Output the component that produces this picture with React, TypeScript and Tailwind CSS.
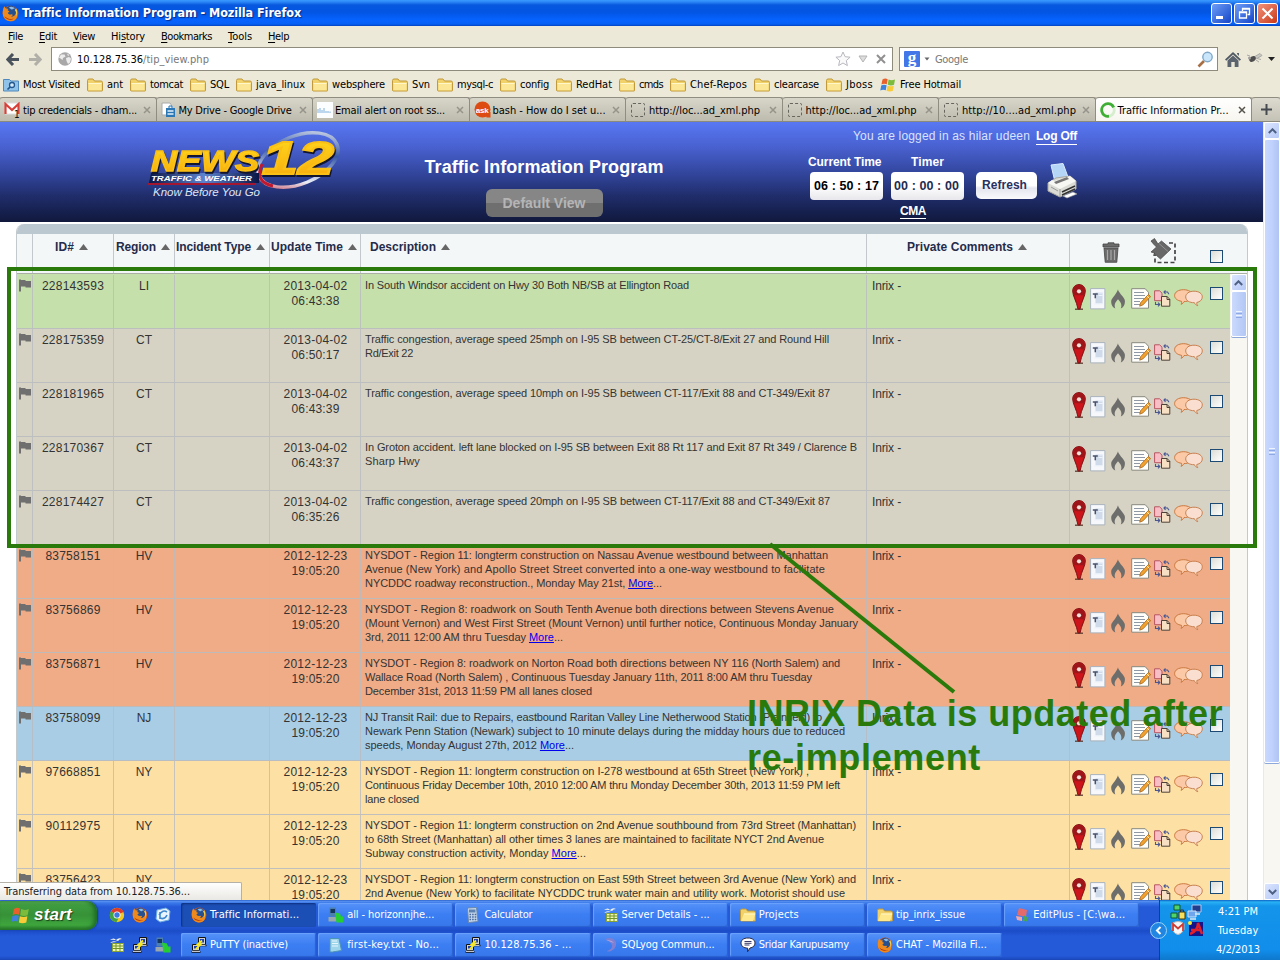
import React, { useLayoutEffect, useRef, useState } from "react";

/* Text set to a known advance width by spreading the difference over its letters. */
function Fit({ w, className = "", children }: { w: number; className?: string; children: React.ReactNode }) {
  const ref = useRef<HTMLSpanElement>(null);
  const [spacing, setSpacing] = useState(0);
  useLayoutEffect(() => {
    const el = ref.current;
    if (!el) return;
    const count = (el.textContent || "").length;
    const natural = el.getBoundingClientRect().width - spacing * count;
    if (count > 0) setSpacing((w - natural) / count);
  }, [w]);
  return (
    <span ref={ref} className={`inline-block whitespace-pre ${className}`} style={{ letterSpacing: `${spacing}px` }}>
      {children}
    </span>
  );
}

const TAHOMA = "font-['DejaVu_Sans_Condensed','DejaVu_Sans',sans-serif] [font-stretch:condensed]";
const ARIAL = "font-['Liberation_Sans',sans-serif]";

/* ---------- icons ---------- */

function Firefox({ s = 16 }: { s?: number }) {
  return (
    <svg width={s} height={s} viewBox="0 0 16 16" className="shrink-0">
      <circle cx="8" cy="8" r="7.4" fill="#d9560f" />
      <circle cx="8.200" cy="6.200" r="5.400" fill="#27508f" />
      <path d="M6.500 2.500c1.600-1.400 4.500-.8 5.500 1-1.400-.2-1.800.6-3 .8z" fill="#8dbde6" />
      <path d="M1 4.500C1.200 3 2 1.600 2.600 1.200c0 1 .3 1.500 1 2.100 1-.2 1.800 0 2.500.4C5 4.400 5 5 6.400 5.600c.9.3.6 1.100-.7 1.500-.7 1.200 1.500 2.500 3.400 1.600 1.500.2.9 1.700-.7 2.200 3 .6 5.400-2 4.700-5.400C15.400 8.500 14.800 15.300 8 15.400 2.500 15.300-.3 10 1 4.500z" fill="#ee8a1d" />
      <path d="M13.300 3.300c1.500 2.600 1.300 5.500.2 7.300.2-2-.2-4.500-1.500-6z" fill="#f8cf45" />
      <path d="M2.300 10.500c1.500 3 5.500 4.300 8.800 2.500-3 .5-6.300-.2-8.800-2.500z" fill="#a92d0c" />
    </svg>
  );
}

function Folder({ open = false }: { open?: boolean }) {
  return (
    <svg width="16" height="16" viewBox="0 0 16 16" className="shrink-0">
      <path d="M.5 13.500V3.500q0-1.500 1.500-1.500h4l1.500 2h6.500q1.500 0 1.500 1.500v8q0 .5-.5.5H1z" fill="#f1d169" stroke="#c19a3b" />
      <path d={open ? "M1 14l3-7.500h11.500l-2.500 7.500z" : "M1.500 13.300V6h13v7.300z"} fill={open ? "#ffe98c" : "#fbe795"} />
      <path d={open ? "M4 7h11" : "M1.500 6.500h13"} stroke="#fff7c9" />
    </svg>
  );
}

function MostVisited() {
  return (
    <svg width="16" height="16" viewBox="0 0 16 16" className="shrink-0">
      <path d="M.5 14V2.500h6l1.500 1.500h7.500v10z" fill="#8fc3ea" stroke="#4f88bd" />
      <circle cx="9" cy="8" r="2.500" fill="#d5ecfb" stroke="#24578c" strokeWidth="1.300" />
      <path d="M7.200 9.800L4.500 12.500" stroke="#24578c" strokeWidth="1.700" />
    </svg>
  );
}

function WinFlag({ s = 16 }: { s?: number }) {
  return (
    <svg width={s} height={s} viewBox="0 0 16 16" className="shrink-0">
      <path d="M2.500 2.500Q5 .8 7.700 2.200L6.800 7.300Q4 6 1.400 7.500z" fill="#e8612c" />
      <path d="M8.600 2.600Q11.500 4 15 2.500L14 7.700Q11 9.100 7.700 7.700z" fill="#7dbb3c" />
      <path d="M1.200 8.500Q4 7 6.600 8.300L5.800 13.300Q3 12 .3 13.500z" fill="#3f82dd" />
      <path d="M7.500 8.700Q10.600 10 13.800 8.700L12.900 13.800Q9.700 15.200 6.600 13.800z" fill="#f8cb38" />
    </svg>
  );
}

function Putty() {
  return (
    <svg width="16" height="16" viewBox="0 0 16 16" className="shrink-0">
      <path d="M7.500.5h7v7h-7zM1.500 7.500h7v6h-7z" fill="#d4d4cf" stroke="#111" />
      <path d="M9 2h4v3.500H9zM3 9h4v2.500H3z" fill="#1b3fb0" />
      <path d="M8 8.500h7.500M.5 15h9" stroke="#111" strokeWidth="1.500" />
      <path d="M8.500 8.300h6M1 14.300h8" stroke="#eee" />
      <path d="M11 3.500L6.500 7.500h3L5 12" fill="none" stroke="#f7e822" strokeWidth="1.800" />
    </svg>
  );
}

function HostsIcon() {
  return (
    <svg width="16" height="16" viewBox="0 0 16 16" className="shrink-0">
      <path d="M1.500.500h6.500v9H1.500z" fill="#4b7fae" />
      <path d="M2.500 2h4.500v4H2.500z" fill="#14365e" />
      <path d="M.5 10h8v4.500h-8z" fill="#97a7ad" />
      <path d="M7 5.500l5 1 1 3h2.500V15.500H8.500z" fill="#25cf33" />
    </svg>
  );
}

function SheetIcon() {
  return (
    <svg width="16" height="16" viewBox="0 0 16 16" className="shrink-0">
      <path d="M1 3Q5 0 7 3q3-3 6-1-3 0-4 2-4-2-8-1zM1 6q3-3 7-1-4 0-7 1z" fill="#f4f6ea" />
      <path d="M3.500 6.500h11v8h-11z" fill="#f1f6b4" stroke="#8aa434" />
      <path d="M3.500 9h11M3.500 11.500h11M7 6.500v8M11 6.500v8" stroke="#71952b" />
    </svg>
  );
}

function TaskGlyph({ kind }: { kind: string }) {
  switch (kind) {
    case "firefox":
      return <Firefox />;
    case "putty":
      return <Putty />;
    case "hosts":
      return <HostsIcon />;
    case "sheet":
      return <SheetIcon />;
    case "folder":
      return <Folder open />;
    case "calc":
      return (
        <svg width="16" height="16" viewBox="0 0 16 16" className="shrink-0">
          <path d="M2.500 1l9-.5 1.500 14-9.500 1z" fill="#c7d9ec" stroke="#6c88ac" />
          <path d="M4 2.500h6.500v3H4z" fill="#5d82b2" />
          <path d="M4.500 7.500h7M4.500 10h7M4.500 12.500h7" stroke="#49699a" strokeDasharray="1.600 1" strokeWidth="1.500" />
        </svg>
      );
    case "note":
      return (
        <svg width="16" height="16" viewBox="0 0 16 16" className="shrink-0">
          <path d="M2 1.500h9l2.500 12-9 1.500H2z" fill="#9fd5ea" stroke="#4c94b8" />
          <path d="M4 4h5M4 6.500h6M4 9h6" stroke="#e6f8ff" />
        </svg>
      );
    case "sql":
      return (
        <svg width="16" height="16" viewBox="0 0 16 16" className="shrink-0">
          <path d="M2 2q8-3 11 3 1 6-5 9-3 1-4 0 6-2 5-6-2-4-7-6z" fill="#7f7fd4" />
          <path d="M3 3q6 0 8 3-3-1-8-3z" fill="#b9a5d8" />
        </svg>
      );
    case "chat":
      return (
        <svg width="16" height="16" viewBox="0 0 16 16" className="shrink-0">
          <path d="M8 1c4.500 0 7 2.200 7 5s-2 4.500-5 5l-2.500 3.800.2-3.700C3.500 11 1 9 1 6s2.500-5 7-5z" fill="#fff" stroke="#2a2a44" />
          <path d="M4.500 4.500h7M4.500 6.300h7M4.500 8h5" stroke="#3a3a68" />
        </svg>
      );
    default:
      return (
        <svg width="16" height="16" viewBox="0 0 16 16" className="shrink-0">
          <path d="M5 1l8 2-1 7-9-2z" fill="#e66a6a" />
          <path d="M2 9l6 1v4l-5-1z" fill="#f4a7a7" />
          <path d="M10 9l3 5M9 14l5-4" stroke="#4ba84c" strokeWidth="2" />
        </svg>
      );
  }
}

function Logo() {
  return (
    <svg width="196" height="72" viewBox="0 0 196 72" className="shrink-0">
      <defs>
        <linearGradient id="ring" x1="0" y1="1" x2="1" y2="0">
          <stop offset="0" stopColor="#b9152c" />
          <stop offset=".25" stopColor="#e9edf6" />
          <stop offset=".6" stopColor="#3658a4" />
          <stop offset="1" stopColor="#ffffff" />
        </linearGradient>
        <linearGradient id="gold" x1="0" y1="0" x2="0" y2="1">
          <stop offset="0" stopColor="#ffdc1e" />
          <stop offset="1" stopColor="#f7a80c" />
        </linearGradient>
        <linearGradient id="strip" x1="0" y1="0" x2="1" y2="0">
          <stop offset="0" stopColor="#0a1646" />
          <stop offset=".5" stopColor="#5d83cf" />
          <stop offset="1" stopColor="#0a1646" />
        </linearGradient>
      </defs>
      <ellipse cx="151" cy="30" rx="42" ry="24" transform="rotate(-22 151 30)" fill="none" stroke="url(#ring)" strokeWidth="3.500" />
      <path d="M115 34Q107 52 126 56" fill="none" stroke="#c11930" strokeWidth="3" />
      <path d="M4 43h108v10H2z" fill="url(#strip)" />
      <path d="M1 54h108" stroke="#a4162f" strokeWidth="2" />
      <g fontFamily="Liberation Sans, sans-serif" fontWeight="bold" fontStyle="italic">
        <text x="4" y="40.500" fontSize="29" textLength="108" lengthAdjust="spacingAndGlyphs" fill="url(#gold)" stroke="#fbc015" strokeWidth="1.400" className="[filter:drop-shadow(1px_2px_0_#12162e)]">NEWS</text>
        <text x="115" y="43.500" fontSize="46" textLength="72" lengthAdjust="spacingAndGlyphs" fill="url(#gold)" stroke="#fbc015" strokeWidth="2" className="[filter:drop-shadow(1px_2px_0_#12162e)]">12</text>
        <text x="4" y="50.500" fontSize="8" textLength="101" lengthAdjust="spacingAndGlyphs" fill="#fff">TRAFFIC &amp; WEATHER</text>
      </g>
      <text x="6" y="66" fontSize="11.500" fontFamily="Liberation Sans, sans-serif" fontStyle="italic" textLength="107" fill="#dfe4f5">Know Before You Go</text>
    </svg>
  );
}

function Printer() {
  return (
    <svg width="31" height="37" viewBox="0 0 31 37" className="shrink-0">
      <path d="M4 2l12-1.500L21 14 8 19z" fill="#b5d5f7" stroke="#d9ebff" />
      <path d="M1 20l8-5 14-2 6 5v8L13 34 1 28z" fill="#dcdcd6" stroke="#a9a9a3" />
      <path d="M1 20l12 6 16-8-6-5-3 1-12 4-3-1z" fill="#f7f7f3" />
      <path d="M7 19l13-5 2 2-13 5z" fill="#777" />
      <path d="M13 26v8M4 24l7 4" stroke="#999" />
      <path d="M15 29l13-6M15 32l13-6" stroke="#333" strokeWidth="1.500" />
      <path d="M16 33l10-4 4 2-10 4z" fill="#fff" stroke="#999" strokeWidth=".6" />
    </svg>
  );
}

function RowIcons() {
  return (
    <div className="flex items-start pl-[2px] pt-[9px]">
      <svg width="14" height="26" viewBox="0 0 14 26" className="shrink-0">
        <path d="M3 25.200h8" stroke="#5c3b30" strokeWidth="1.300" />
        <path d="M7 .6c3.800 0 6.300 2.800 6.300 6.300C13.300 12 9.500 17 8 25h-2C4.500 17 .7 12 .7 6.900.7 3.400 3.200.6 7 .6z" fill="#cc141a" stroke="#7d1214" />
        <path d="M7 1.200c3.500 0 5.700 2.500 5.700 5.700 0 1.600-.5 3-1.200 4.300H2.500C1.800 9.900 1.300 8.500 1.300 6.900c0-3.200 2.200-5.700 5.700-5.700z" fill="#9c1519" />
        <circle cx="7" cy="7.300" r="2.100" fill="#f1e2da" />
      </svg>
      <svg width="16" height="22" viewBox="0 0 16 22" className="ml-[4px] mt-[4px] shrink-0">
        <path d="M.6.600h14.300v20.300H.6z" fill="#f6f8fb" stroke="#a9b3be" />
        <path d="M5.500 4.500h7v11h-7z" fill="#cfdaea" />
        <path d="M8.500 5h4M8.500 7.500h4M4 16h8" stroke="#eef4fc" />
        <path d="M2.800 6h5M5.300 6v4.300" stroke="#48536b" strokeWidth="1.500" />
      </svg>
      <svg width="14" height="20" viewBox="0 0 14 20" className="ml-[5px] mt-[5px] shrink-0">
        <path d="M7 .3c.2 3 5 6.500 6.700 10.500.9 4-1 7.500-3.900 8.600 1.300-3 .4-6-2.800-9.100-3 3.100-4.200 6-2.700 9.100C1.200 18.200-.4 14.700.4 11 1.800 8.500 5.800 4.500 7 .3z" fill="#6d6d6b" />
      </svg>
      <svg width="20" height="21" viewBox="0 0 20 21" className="ml-[6px] mt-[4px] shrink-0">
        <path d="M.7.700h13.500l3.300 3.600v15.900H.7z" fill="#fffefb" stroke="#87887f" />
        <path d="M3 4.500h10M3 7.500h11M3 10.500h10M3 13.500h6M3 16.500h6" stroke="#8f98a5" />
        <path d="M17.300 6.600l2.300 2-7.500 8.200-3.400 1.400 1-3.600z" fill="#f2a12c" stroke="#a8641a" strokeWidth=".8" />
        <path d="M16 8l2.300 2.200" stroke="#fff0bd" />
      </svg>
      <svg width="17" height="17" viewBox="0 0 17 17" className="ml-[3px] mt-[6px] shrink-0">
        <path d="M.6.800h5l2.400 2.400v7.500H.6z" fill="#f7bfc5" stroke="#b75561" />
        <path d="M7.500 6.500h5.600l2.700 2.800v6.900H7.500z" fill="#f7dfc4" stroke="#4e4238" />
        <path d="M13 6.500v3h3" fill="none" stroke="#4e4238" />
        <path d="M10 2h3.500l1.500 2.200M11.500.5L10 2l1.500 1.800M1.500 12v2.500h4M4 12.700l1.800 1.800L4 16.300" fill="none" stroke="#4a5792" strokeWidth="1.100" />
      </svg>
      <svg width="29" height="18" viewBox="0 0 29 18" className="ml-[3px] mt-[5px] shrink-0">
        <path d="M9.500.7c5 0 9 2.300 9 5.900s-4 6-8.500 6c-.5 1.200-1.500 2.200-3 2.700.7-1 .8-2 .5-3C3.500 11.700.6 9.500.6 6.600.6 3 4.500.7 9.500.7z" fill="#fcc9a6" stroke="#c9783f" />
        <path d="M20 2.200c4.800 0 8.300 2.300 8.300 5.700 0 2.800-2.300 5-5.500 5.600-.2 1.200.2 2.300 1 3.200-1.700-.5-2.900-1.500-3.400-3-5 .1-8.700-2.200-8.700-5.800 0-3.300 3.300-5.700 8.300-5.700z" fill="#fadfd0" stroke="#c9804f" />
      </svg>
      <Checkbox className="ml-[7px] mt-[3px]" />
    </div>
  );
}

function Checkbox({ className = "" }: { className?: string }) {
  return <div className={`h-[13px] w-[13px] shrink-0 border border-[#1c4a73] bg-linear-to-br from-[#dcdcd6] to-white ${className}`} />;
}

function Chevron({ down = false }: { down?: boolean }) {
  return (
    <svg width="9" height="6" viewBox="0 0 9 6">
      <path d={down ? "M.8 1l3.700 3.700L8.200 1" : "M.8 5l3.700-3.700L8.200 5"} fill="none" stroke="#4d6185" strokeWidth="2" />
    </svg>
  );
}

/* ---------- browser chrome ---------- */

function TitleBar() {
  return (
    <div className="flex h-[26px] items-center bg-[linear-gradient(180deg,#3a9bff_0,#2a86f5_2px,#0758de_5px,#0355e2_12px,#0663ff_20px,#0560f5_24px,#0343c0_26px)] pl-[2px] pr-[2px]">
      <Firefox s={17} />
      <Fit w={278} className={`ml-[3px] pt-px text-[12.500px] font-bold text-white [text-shadow:1px_1px_1px_#0a2a80] ${TAHOMA}`}>
        Traffic Information Program - Mozilla Firefox
      </Fit>
      <div className="ml-auto flex gap-[2px]">
        <div className="flex h-[21px] w-[21px] rounded-[3px] border border-white bg-linear-to-br from-[#6f9df6] to-[#1543c8] pl-[4px] pt-[12px]">
          <div className="h-[3px] w-[7px] bg-white" />
        </div>
        <div className="flex h-[21px] w-[21px] items-center justify-center rounded-[3px] border border-white bg-linear-to-br from-[#6f9df6] to-[#1543c8]">
          <svg width="13" height="13" viewBox="0 0 13 13">
            <path d="M4.500 4V1.500h7v6H9.500M4.500 2h7" fill="none" stroke="#fff" strokeWidth="1.300" />
            <path d="M1.500 5h7v6h-7zM1.500 5.700h7" fill="none" stroke="#fff" strokeWidth="1.300" />
          </svg>
        </div>
        <div className="flex h-[21px] w-[21px] items-center justify-center rounded-[3px] border border-white bg-linear-to-br from-[#f0927a] to-[#c9340d]">
          <svg width="13" height="13" viewBox="0 0 13 13">
            <path d="M1.500 1.500l10 10M11.500 1.500l-10 10" stroke="#fff" strokeWidth="2" />
          </svg>
        </div>
      </div>
    </div>
  );
}

const MENU: [string, string, string, number][] = [
  ["", "F", "ile", 15],
  ["", "E", "dit", 18],
  ["", "V", "iew", 22],
  ["Hi", "s", "tory", 34],
  ["", "B", "ookmarks", 51],
  ["", "T", "ools", 24],
  ["", "H", "elp", 21],
];

function MenuBar() {
  return (
    <div className={`flex h-[20px] gap-[16px] pl-[8px] pt-px text-[11px] leading-[19px] text-black ${TAHOMA}`}>
      {MENU.map(([a, u, b, w]) => (
        <Fit key={u + b} w={w}>
          {a}
          <span className="underline underline-offset-2">{u}</span>
          {b}
        </Fit>
      ))}
    </div>
  );
}

function NavBar() {
  return (
    <div className={`flex h-[26px] items-start pt-px text-[11px] ${TAHOMA}`}>
      <div className="flex h-[24px] w-[51px] items-center gap-[10px] pl-[6px]">
        <svg width="13" height="13" viewBox="0 0 13 13">
          <path d="M7 1L1.800 6.500 7 12M2 6.500h11" fill="none" stroke="#4a525c" strokeWidth="3" />
        </svg>
        <svg width="13" height="13" viewBox="0 0 13 13">
          <path d="M6 1l5.200 5.500L6 12M11 6.500H0" fill="none" stroke="#b0afa8" strokeWidth="3" />
        </svg>
      </div>
      <div className="flex h-[24px] w-[842px] items-center border border-[#8e8b7d] bg-white pl-[6px] pr-[6px]">
        <svg width="14" height="14" viewBox="0 0 14 14">
          <circle cx="7" cy="7" r="6.700" fill="#a8a8a8" />
          <path d="M3 2.500l3.500 0 1 2-2.500 1.500-.5 2-2-1.500-1.500-1zM8 6l3-1 2 1.500-1 4-2 1.500L8.500 9zM9 1.500l2.500 1.500-1.500 1z" fill="#ececec" />
        </svg>
        <Fit w={66} className="ml-[5px] pt-[2px] text-black">10.128.75.36</Fit>
        <Fit w={66} className="pt-[2px] text-[#777]">/tip_view.php</Fit>
        <svg width="16" height="16" viewBox="0 0 16 16" className="ml-auto">
          <path d="M8 1l2.100 4.700 5 .5-3.800 3.400 1.100 5L8 12l-4.400 2.600 1.100-5L.9 6.200l5-.5z" fill="#fafafa" stroke="#b8b8c0" />
        </svg>
        <svg width="10" height="8" viewBox="0 0 10 8" className="ml-[7px]">
          <path d="M1 1h8L5 7z" fill="#ddd" stroke="#b4b4b4" />
        </svg>
        <svg width="10" height="10" viewBox="0 0 10 10" className="ml-[8px]">
          <path d="M1 1l8 8M9 1L1 9" stroke="#909090" strokeWidth="2" />
        </svg>
      </div>
      <div className="ml-[6px] flex h-[24px] w-[319px] items-center border border-[#8e8b7d] bg-white pl-[4px] pr-[3px]">
        <div className="flex h-[16px] w-[16px] items-center justify-center rounded-[1px] bg-[#4377e8] pb-[3px] font-['Liberation_Serif',serif] text-[17px] font-bold leading-none text-white">g</div>
        <svg width="6" height="4" viewBox="0 0 6 4" className="ml-[4px]">
          <path d="M.5.500h5L3 3.500z" fill="#666" />
        </svg>
        <Fit w={33} className="ml-[5px] pt-[2px] text-[#777]">Google</Fit>
        <svg width="17" height="17" viewBox="0 0 17 17" className="ml-auto">
          <path d="M7 10l-5.500 5.500" stroke="#a86f45" strokeWidth="2.600" />
          <circle cx="10.500" cy="6" r="4.700" fill="#c9e6fa" stroke="#81a8c8" strokeWidth="1.400" />
        </svg>
      </div>
      <div className="flex h-[24px] items-center pl-[7px]">
        <svg width="16" height="15" viewBox="0 0 16 15">
          <path d="M8 0l8 7.500-1.300 1.300L8 2.500 1.300 8.800 0 7.500z" fill="#4f5862" />
          <path d="M2.500 8.500L8 3.500l5.500 5V15H9.700v-5H6.300v5H2.500zM12 1h2v3l-2-2z" fill="#5b646e" />
        </svg>
        <svg width="17" height="14" viewBox="0 0 17 14" className="ml-[5px]">
          <path d="M8 5l6-3.500 2 2-5 3z" fill="#c9c8c2" stroke="#aaa9a4" />
          <path d="M11 6.500l4 1M10 8l3 2M4 4L1 3" fill="none" stroke="#aaa9a4" />
          <ellipse cx="6.500" cy="7" rx="3.500" ry="2.500" fill="#4d4d4d" transform="rotate(-30 6.500 7)" />
          <circle cx="3.500" cy="6" r="1.500" fill="#9d9d9d" />
        </svg>
        <svg width="7" height="4" viewBox="0 0 7 4" className="ml-[5px]">
          <path d="M0 0h7L3.500 4z" fill="#222" />
        </svg>
      </div>
    </div>
  );
}

const BOOKMARKS: [string, number][] = [
  ["Most Visited", 57],
  ["ant", 16],
  ["tomcat", 33],
  ["SQL", 19],
  ["java_linux", 49],
  ["websphere", 53],
  ["Svn", 18],
  ["mysql-c", 36],
  ["config", 29],
  ["RedHat", 36],
  ["cmds", 24],
  ["Chef-Repos", 57],
  ["clearcase", 45],
  ["Jboss", 27],
  ["Free Hotmail", 61],
];

function Bookmarks() {
  return (
    <div className={`flex h-[25px] items-center gap-[7px] pl-[3px] text-[11px] text-black ${TAHOMA}`}>
      {BOOKMARKS.map(([name, w], i) => (
        <div key={name} className="flex items-center gap-[4px]">
          {i === 0 ? <MostVisited /> : i === BOOKMARKS.length - 1 ? <WinFlag /> : <Folder />}
          <Fit w={w} className="pt-[2px]">{name}</Fit>
        </div>
      ))}
    </div>
  );
}

const TABS: { icon: string; title: string; w: number }[] = [
  { icon: "gmail", title: "tip credencials - dham...", w: 114 },
  { icon: "drive", title: "My Drive - Google Drive", w: 113 },
  { icon: "mail", title: "Email alert on root ss...", w: 110 },
  { icon: "ask", title: "bash - How do I set u...", w: 113 },
  { icon: "blank", title: "http://loc...ad_xml.php", w: 111 },
  { icon: "blank", title: "http://loc...ad_xml.php", w: 111 },
  { icon: "blank", title: "http://10....ad_xml.php", w: 114 },
  { icon: "load", title: "Traffic Information Pr...", w: 111 },
];

function TabIcon({ kind }: { kind: string }) {
  if (kind === "gmail")
    return (
      <svg width="17" height="16" viewBox="0 0 17 16" className="shrink-0">
        <path d="M1 1h14v11H1z" fill="#fff" stroke="#ddd" />
        <path d="M1.500 12V2L8 8l6.500-6v10" fill="none" stroke="#d8413a" strokeWidth="2.200" />
        <text x="10" y="15.500" fontSize="10" fontFamily="DejaVu Sans" fill="#111">1</text>
      </svg>
    );
  if (kind === "drive")
    return (
      <svg width="16" height="16" viewBox="0 0 16 16" className="shrink-0">
        <path d="M1 1h8l2 3v9H1z" fill="#fff" stroke="#aaa" />
        <path d="M5 6h9v9H5z" fill="#2b78b5" />
        <path d="M7 5h5M6.500 9h6M6.500 12h6" stroke="#e2f1fb" strokeWidth="1.300" />
        <path d="M8 6V4h3v2" fill="none" stroke="#2b78b5" />
      </svg>
    );
  if (kind === "mail")
    return (
      <svg width="16" height="16" viewBox="0 0 16 16" className="shrink-0">
        <path d="M0 0h16v16H0z" fill="#fbfdff" />
        <path d="M1 11V7M3 11V6M5 11V8M7 11V6M9 11V9M11 11V9M13 11V9.500" stroke="#7fb0db" />
      </svg>
    );
  if (kind === "ask")
    return (
      <svg width="17" height="17" viewBox="0 0 17 17" className="shrink-0">
        <circle cx="8.500" cy="8.500" r="8" fill="#de4b12" />
        <path d="M11 11h5.500v5.500h-4z" fill="#de4b12" />
        <text x="1.700" y="11.500" fontSize="8" fontWeight="bold" fontFamily="Liberation Sans" fill="#fff" textLength="13">ask</text>
      </svg>
    );
  if (kind === "load")
    return (
      <svg width="16" height="16" viewBox="0 0 16 16" className="shrink-0">
        <circle cx="8" cy="8" r="6.300" fill="none" stroke="#d5efce" strokeWidth="2.800" />
        <path d="M9 14.200A6.300 6.300 0 1 1 13.700 5.300" fill="none" stroke="#3fae35" strokeWidth="2.800" />
      </svg>
    );
  return <div className="ml-px mr-[2px] h-[14px] w-[14px] shrink-0 rounded-[2px] border border-dashed border-[#66655e]" />;
}

function TabStrip() {
  return (
    <div className={`flex h-[25px] overflow-hidden border-b border-[#8b897c] bg-[#c2bfb2] text-[11px] text-black ${TAHOMA}`}>
      {TABS.map((t, i) => (
        <div
          key={i}
          className={`flex w-[156.500px] shrink-0 items-center rounded-t-[3px] border-r border-t border-[#8f8d80] pl-[4px] pr-[5px] ${
            t.icon === "load" ? "bg-linear-to-b from-white to-[#f7f6ef]" : "bg-linear-to-b from-[#d8d6c9] to-[#bdbbae]"
          }`}
        >
          <TabIcon kind={t.icon} />
          <Fit w={t.w} className="ml-[2px] pt-[3px]">{t.title}</Fit>
          <svg width="8" height="8" viewBox="0 0 8 8" className="ml-auto shrink-0">
            <path d="M1 1l6 6M7 1L1 7" stroke={t.icon === "load" ? "#55534c" : "#96948a"} strokeWidth="1.500" />
          </svg>
        </div>
      ))}
      <div className="flex flex-1 items-center justify-center rounded-t-[3px] border-t border-[#8f8d80] bg-linear-to-b from-[#dddbd0] to-[#c4c2b5]">
        <svg width="11" height="11" viewBox="0 0 11 11">
          <path d="M5.500 0v11M0 5.500h11" stroke="#454a50" strokeWidth="2" />
        </svg>
      </div>
    </div>
  );
}

/* ---------- page ---------- */

function PageHeader() {
  return (
    <div className={`flex h-[100px] shrink-0 bg-[linear-gradient(180deg,#5878f3_0%,#4961d0_25%,#33479f_50%,#1f2c69_75%,#10183c_100%)] ${ARIAL}`}>
      <div className="w-[424px] pl-[147px] pt-[8px]">
        <Logo />
      </div>
      <div className="flex w-[240px] flex-col items-center pt-[34px]">
        <Fit w={239} className="text-[18px] font-bold leading-[22px] text-white">Traffic Information Program</Fit>
        <div className="mt-[11px] flex h-[28px] w-[117px] items-center justify-center rounded-[6px] bg-[linear-gradient(180deg,#868686_50%,#6f6f6f_50%)]">
          <Fit w={83} className="text-[14px] font-bold text-[#b5b5b5]">Default View</Fit>
        </div>
      </div>
      <div className="ml-[144px] flex w-[270px] flex-col pt-[6px]">
        <div className="flex gap-[6px] pl-[45px] text-[12px] leading-[16px] text-[#dbe2ff]">
          <Fit w={177}>You are logged in as hilar udeen</Fit>
          <Fit w={41} className="border-b border-white font-bold text-white">Log Off</Fit>
        </div>
        <div className="mt-[9px] flex">
          <div className="flex w-[75px] flex-col">
            <Fit w={74} className="text-[12px] font-bold leading-[16px] text-white">Current Time</Fit>
            <div className="ml-[2px] mt-[2px] flex h-[28px] w-[73px] items-center justify-center rounded-[4px] bg-linear-to-b from-white via-white to-[#e7e7ec] text-[12.500px] font-bold text-black">
              <Fit w={65}>06 : 50 : 17</Fit>
            </div>
          </div>
          <div className="ml-[8px] flex w-[73px] flex-col items-center">
            <Fit w={33} className="text-[12px] font-bold leading-[16px] text-white">Timer</Fit>
            <div className="mt-[2px] flex h-[28px] w-[73px] shrink-0 items-center justify-center rounded-[4px] bg-linear-to-b from-white via-white to-[#e7e7ec] pr-[2px] text-[12.500px] font-bold text-[#232c4e]">
              <Fit w={65}>00 : 00 : 00</Fit>
            </div>
          </div>
          <div className="ml-[12px] mt-[18px] flex h-[27px] w-[61px] items-center justify-center rounded-[5px] bg-[linear-gradient(180deg,#ffffff_50%,#e4e5ee_60%,#fafafc_100%)] pb-[2px] pr-[4px] text-[12px] font-bold text-[#28315f]">
            <Fit w={45}>Refresh</Fit>
          </div>
          <div className="-mb-px ml-[10px] mt-[9px]">
            <Printer />
          </div>
        </div>
        <div className="mt-[5px] flex pl-[92px]">
          <Fit w={26} className="border-b border-white text-[12px] font-bold leading-[13px] text-white">CMA</Fit>
        </div>
      </div>
    </div>
  );
}

function Sort() {
  return (
    <svg width="9" height="6" viewBox="0 0 9 6" className="shrink-0">
      <path d="M4.500 0L9 6H0z" fill="#666" />
    </svg>
  );
}

function HeadCell({ label, w, cell }: { label: string; w: number; cell: string }) {
  return (
    <div className={`flex shrink-0 items-start gap-[5px] border-r border-[#c3c8cc] pt-[5px] ${cell}`}>
      <Fit w={w} className="leading-[16px]">{label}</Fit>
      <div className="flex h-[16px] items-center">
        <Sort />
      </div>
    </div>
  );
}

function TableHead() {
  return (
    <div className="flex h-[40px] border-b border-[#a9b0a4] bg-[#f4f7f8] text-[12px] font-bold text-[#252c4b]">
      <div className="w-[16px] shrink-0 border-r border-[#c3c8cc]" />
      <HeadCell label="ID#" w={19} cell="w-[81px] pl-[22px]" />
      <HeadCell label="Region" w={40} cell="w-[61px] pl-[2px]" />
      <HeadCell label="Incident Type" w={75} cell="w-[95px] pl-px" />
      <HeadCell label="Update Time" w={72} cell="w-[91px] pl-px" />
      <HeadCell label="Description" w={66} cell="w-[506px] pl-[9px]" />
      <HeadCell label="Private Comments" w={106} cell="w-[203px] pl-[40px]" />
      <div className="flex flex-1 pl-[32px]">
        <svg width="18" height="21" viewBox="0 0 18 21" className="mt-[8px] shrink-0">
          <path d="M6 2V.8h6V2h5v3H1V2zM2 6h14l-1.200 14.300H3.200z" fill="#6b6b6b" stroke="#454545" strokeWidth=".8" />
          <path d="M5.500 8v10M9 8v10M12.500 8v10" stroke="#a8a8a8" strokeWidth="1.200" />
        </svg>
        <svg width="27" height="26" viewBox="0 0 27 26" className="ml-[30px] mt-[4px] shrink-0">
          <path d="M5 14v10.500h20V5H17" fill="none" stroke="#444" strokeWidth="1.700" strokeDasharray="4 2.500" />
          <path d="M1 3l3.500-2.500L8 6l3.500-3L21 11 10.500 21 6 17l-2.500.5L4.500 15 1 14l5.500-5L3.500 6z" fill="#686868" stroke="#444" strokeWidth=".7" />
          <path d="M9 5.500l9 8" stroke="#929292" strokeWidth="1" />
        </svg>
        <Checkbox className="ml-[33px] mt-[16px]" />
      </div>
    </div>
  );
}

type Row = { id: string; region: string; date: string; time: string; bg: string; lines: [string, number, boolean?][] };
const GREEN = "bg-[#c6e0ac]";
const GREY = "bg-[#d7d3c4]";
const ORANGE = "bg-[#f0ac86]";
const BLUE = "bg-[#a9cde4]";
const YELLOW = "bg-[#fce0a4]";

const ROWS: Row[] = [
  { id: "228143593", region: "LI", date: "2013-04-02", time: "06:43:38", bg: GREEN, lines: [["In South Windsor accident on Hwy 30 Both NB/SB at Ellington Road", 324]] },
  { id: "228175359", region: "CT", date: "2013-04-02", time: "06:50:17", bg: GREY, lines: [["Traffic congestion, average speed 25mph on I-95 SB between CT-25/CT-8/Exit 27 and Round Hill", 464], ["Rd/Exit 22", 48]] },
  { id: "228181965", region: "CT", date: "2013-04-02", time: "06:43:39", bg: GREY, lines: [["Traffic congestion, average speed 10mph on I-95 SB between CT-117/Exit 88 and CT-349/Exit 87", 465]] },
  { id: "228170367", region: "CT", date: "2013-04-02", time: "06:43:37", bg: GREY, lines: [["In Groton accident. left lane blocked on I-95 SB between Exit 88 Rt 117 and Exit 87 Rt 349 / Clarence B", 492], ["Sharp Hwy", 55]] },
  { id: "228174427", region: "CT", date: "2013-04-02", time: "06:35:26", bg: GREY, lines: [["Traffic congestion, average speed 20mph on I-95 SB between CT-117/Exit 88 and CT-349/Exit 87", 465]] },
  { id: "83758151", region: "HV", date: "2012-12-23", time: "19:05:20", bg: ORANGE, lines: [["NYSDOT - Region 11: longterm construction on Nassau Avenue westbound between Manhattan", 463], ["Avenue (New York) and Apollo Street Street converted into a one-way westbound to facilitate", 460], ["NYCDDC roadway reconstruction., Monday May 21st, ", 297, true]] },
  { id: "83756869", region: "HV", date: "2012-12-23", time: "19:05:20", bg: ORANGE, lines: [["NYSDOT - Region 8: roadwork on South Tenth Avenue both directions between Stevens Avenue", 469], ["(Mount Vernon) and West First Street (Mount Vernon) until further notice, Continuous Monday January", 493], ["3rd, 2011 12:00 AM thru Tuesday ", 198, true]] },
  { id: "83756871", region: "HV", date: "2012-12-23", time: "19:05:20", bg: ORANGE, lines: [["NYSDOT - Region 8: roadwork on Norton Road both directions between NY 116 (North Salem) and", 475], ["Wallace Road (North Salem) , Continuous Tuesday January 11th, 2011 8:00 AM thru Tuesday", 447], ["December 31st, 2013 11:59 PM all lanes closed", 227]] },
  { id: "83758099", region: "NJ", date: "2012-12-23", time: "19:05:20", bg: BLUE, lines: [["NJ Transit Rail: due to Repairs, eastbound Raritan Valley Line Netherwood Station (Plainfield) to", 457], ["Newark Penn Station (Newark) subject to 10 minute delays during the midday hours due to reduced", 480], ["speeds, Monday August 27th, 2012 ", 209, true]] },
  { id: "97668851", region: "NY", date: "2012-12-23", time: "19:05:20", bg: YELLOW, lines: [["NYSDOT - Region 11: longterm construction on I-278 westbound at 65th Street (New York) ,", 444], ["Continuous Friday December 10th, 2010 12:00 AM thru Monday December 30th, 2013 11:59 PM left", 475], ["lane closed", 54]] },
  { id: "90112975", region: "NY", date: "2012-12-23", time: "19:05:20", bg: YELLOW, lines: [["NYSDOT - Region 11: longterm construction on 2nd Avenue southbound from 73rd Street (Manhattan)", 491], ["to 68th Street (Manhattan) all other times 3 lanes are maintained to facilitate NYCT 2nd Avenue", 459], ["Subway construction activity, Monday ", 221, true]] },
  { id: "83756423", region: "NY", date: "2012-12-23", time: "19:05:20", bg: YELLOW, lines: [["NYSDOT - Region 11: longterm construction on East 59th Street between 3rd Avenue (New York) and", 491], ["2nd Avenue (New York) to facilitate NYCDDC trunk water main and utility work. Motorist should use", 480]] },
];

function TableRow({ row }: { row: Row }) {
  const line = "shrink-0 border-r border-[#b9bbc0]/80";
  return (
    <div className={`flex h-[54px] shrink-0 overflow-hidden border-b border-[#b9bbc0]/90 text-[12px] leading-[15px] text-[#333] ${row.bg}`}>
      <div className={`w-[16px] pl-[2px] pt-[4px] ${line}`}>
        <svg width="13" height="13" viewBox="0 0 13 13">
          <path d="M0 .5h2v12H0zM2 1h4.500v1h5.500v6.500H6.500v-1H2z" fill="#6f6f6f" />
        </svg>
      </div>
      <div className={`w-[81px] pt-[4px] text-center ${line}`}>
        <Fit w={row.id.length * 6.900}>{row.id}</Fit>
      </div>
      <div className={`w-[61px] pt-[4px] text-center ${line}`}>{row.region}</div>
      <div className={`w-[95px] ${line}`} />
      <div className={`flex w-[91px] flex-col items-center pl-px pt-[4px] ${line}`}>
        <Fit w={64}>{row.date}</Fit>
        <Fit w={48}>{row.time}</Fit>
      </div>
      <div className={`flex w-[506px] flex-col items-start pl-[4px] pt-[3px] text-[11px] leading-[14px] ${line}`}>
        {row.lines.map(([text, w, more]) => (
          <Fit key={text} w={w}>
            {text}
            {more && <span className="text-[#0000ee] underline">More</span>}
            {more && "..."}
          </Fit>
        ))}
      </div>
      <div className={`w-[203px] pl-[5px] pt-[4px] ${line}`}>
        <Fit w={29}>Inrix -</Fit>
      </div>
      <RowIcons />
    </div>
  );
}

function ScrollButton({ down = false, className = "" }: { down?: boolean; className?: string }) {
  return (
    <div className={`flex shrink-0 items-center justify-center rounded-[2px] border border-white bg-linear-to-br from-[#dbe5fe] to-[#b5c8f6] ${className}`}>
      <Chevron down={down} />
    </div>
  );
}

function Grip() {
  return (
    <div className="flex flex-col gap-px">
      <div className="h-px w-[6px] bg-[#eef4fe]" />
      <div className="h-px w-[6px] bg-[#8fa9e4]" />
      <div className="h-px w-[6px] bg-[#eef4fe]" />
      <div className="h-px w-[6px] bg-[#8fa9e4]" />
    </div>
  );
}

function Table() {
  return (
    <div className={`ml-[16px] mt-[2px] w-[1232px] flex-1 overflow-hidden rounded-t-[8px] border-x border-[#c3cace] ${ARIAL}`}>
      <div className="h-[10px] bg-[#bbc8d0]" />
      <TableHead />
      <div className="flex h-[626px]">
        <div className={`w-[1213px] overflow-hidden pt-px ${GREEN}`}>
          {ROWS.map((r) => (
            <TableRow key={r.id} row={r} />
          ))}
        </div>
        <div className="flex w-[17px] flex-col bg-[#f8f7f2] px-[0.500px]">
          <ScrollButton className="h-[17px] w-[16px]" />
          <div className="flex h-[46px] w-[16px] items-center justify-center rounded-[2px] border border-white bg-linear-to-r from-[#cbdafd] to-[#b3c7f5] shadow-[0_1px_0_#8ea8dc]">
            <Grip />
          </div>
        </div>
      </div>
    </div>
  );
}

function Note() {
  return (
    <svg width="1280" height="660" viewBox="0 0 1280 660" className="pointer-events-none absolute left-0 top-[260px]">
      <rect x="9" y="9" width="1246" height="277" fill="none" stroke="#297a0b" strokeWidth="4" />
      <path d="M770 284L954 432" stroke="#297a0b" strokeWidth="4" />
    </svg>
  );
}

/* ---------- taskbar ---------- */

const TASKS: { icon: string; label: string; w: number; on?: boolean }[][] = [
  [
    { icon: "firefox", label: "Traffic Informati...", w: 89, on: true },
    { icon: "hosts", label: "all - horizonnjhe...", w: 87 },
    { icon: "calc", label: "Calculator", w: 48 },
    { icon: "sheet", label: "Server Details - ...", w: 88 },
    { icon: "folder", label: "Projects", w: 40 },
    { icon: "folder", label: "tip_inrix_issue", w: 69 },
    { icon: "edit", label: "EditPlus - [C:\\wa...", w: 92 },
  ],
  [
    { icon: "putty", label: "PuTTY (inactive)", w: 78 },
    { icon: "note", label: "first-key.txt - No...", w: 92 },
    { icon: "putty", label: "10.128.75.36 - ...", w: 87 },
    { icon: "sql", label: "SQLyog Commun...", w: 93 },
    { icon: "chat", label: "Sridar Karupusamy", w: 90 },
    { icon: "firefox", label: "CHAT - Mozilla Fi...", w: 91 },
  ],
];

function Taskbar() {
  return (
    <div className={`flex h-[60px] bg-[linear-gradient(180deg,#1c50c0_0,#5a94f0_1px,#3a78ea_3px,#2459d8_7px,#2459d8_26px,#1c4cc8_31px,#2459d8_36px,#2459d8_56px,#1a46b8_60px)] text-[11px] text-white ${TAHOMA}`}>
      <div className="w-[109px] shrink-0 pt-px">
        <div className="flex h-[29px] w-[97px] items-center rounded-r-[10px] bg-[linear-gradient(180deg,#5fb55c_0,#3f9c3f_4px,#379237_14px,#3ea53d_24px,#27762a_29px)] pl-[11px] shadow-[inset_-3px_0_4px_#1e6b26,1px_0_2px_#133f96]">
          <WinFlag s={19} />
          <Fit w={38} className="ml-[4px] pb-[2px] font-['Liberation_Sans',sans-serif] text-[17px] font-bold italic leading-none [text-shadow:1px_1px_1px_#1b3f1b]">start</Fit>
        </div>
      </div>
      <div className="grid w-[72px] shrink-0 grid-cols-[23px_23px_23px] grid-rows-[30px_30px] items-center">
        <svg width="16" height="16" viewBox="0 0 16 16">
          <circle cx="8" cy="8" r="7.200" fill="#f4c91d" />
          <path d="M8 8L1.800 4.500A7.200 7.200 0 0 1 14.500 5z" fill="#dd3b2c" />
          <path d="M8 8L1.700 4.400A7.200 7.200 0 0 0 7.500 15.200L10 10z" fill="#41a341" />
          <circle cx="8" cy="8" r="3.500" fill="#fff" />
          <circle cx="8" cy="8" r="2.700" fill="#3c7ae0" />
        </svg>
        <Firefox />
        <svg width="16" height="16" viewBox="0 0 16 16">
          <path d="M2 3l9-2 4 3-1 9-9 2-4-3z" fill="#eaf4ff" stroke="#6aaae0" />
          <path d="M4 8q4-6 8-3M5 11q5 2 7-3M5 5v7" fill="none" stroke="#3d88cf" strokeWidth="1.600" />
        </svg>
        <SheetIcon />
        <Putty />
        <HostsIcon />
      </div>
      <div className="flex w-[978px] shrink-0 flex-col gap-[6px] pt-[3px]">
        {TASKS.map((line, i) => (
          <div key={i} className="flex gap-[2px]">
            {line.map((t) => (
              <div
                key={t.label}
                className={`flex h-[24px] w-[135.200px] items-center rounded-[2px] pl-[10px] ${
                  t.on
                    ? "bg-[#1c4fb5] shadow-[inset_1px_1px_2px_#0d2f7c]"
                    : "bg-linear-to-b from-[#5591f8] via-[#3b7df2] to-[#3877ec] shadow-[inset_-1px_-1px_1px_#2a60cf,inset_1px_1px_1px_#6ba2fb]"
                }`}
              >
                <TaskGlyph kind={t.icon} />
                <Fit w={t.w} className="ml-[3px] pt-px">{t.label}</Fit>
              </div>
            ))}
          </div>
        ))}
      </div>
      <div className="flex flex-1 border-l border-[#0b3c96] bg-[linear-gradient(180deg,#0e63c4_0,#29b2f5_2px,#1495ea_6px,#118deb_50px,#0f78cc_60px)]">
        <div className="-ml-[10px] mt-[22px] flex h-[17px] w-[17px] shrink-0 items-center justify-center rounded-full border border-[#9cd6fc] bg-[#2086e2]">
          <svg width="7" height="9" viewBox="0 0 7 9">
            <path d="M5.500 1L2 4.500 5.500 8" fill="none" stroke="#fff" strokeWidth="2" />
          </svg>
        </div>
        <svg width="34" height="34" viewBox="0 0 34 34" className="ml-[3px] mt-[4px] shrink-0">
          <path d="M4 1h6v5H4zM1 9h6v5H1z" fill="#4fd36c" stroke="#0d5a2c" />
          <path d="M9 8h6v7H9z" fill="#f6e05e" stroke="#3c3612" />
          <path d="M10.500 8V6h3v2" fill="none" stroke="#333" />
          <path d="M22 1h9v7h-9z" fill="#223d8c" stroke="#a8cdf8" />
          <path d="M18 7h8v6h-8z" fill="#6ea5ec" stroke="#cfe3fc" />
          <path d="M20 15h6M25 10h5" stroke="#dfe9f5" strokeWidth="1.500" />
          <path d="M2 19.500q6-4 12 0v6q-3 5-6 5t-6-5z" fill="#f7f7f7" stroke="#b9b9b9" />
          <path d="M3 27v-7l5 4.500 5-4.500v7" fill="none" stroke="#cf3a33" strokeWidth="1.800" />
          <path d="M19 18h14v14H19z" fill="#15158a" />
          <path d="M20 30q8-3 8-11l4 11M21 26h10" fill="none" stroke="#e0202a" strokeWidth="2.500" />
          <circle cx="20" cy="19" r="2" fill="#f7ee3c" />
        </svg>
        <div className="flex flex-1 flex-col items-center pr-[8px] pt-[2px] leading-[19px]">
          <Fit w={40}>4:21 PM</Fit>
          <Fit w={41}>Tuesday</Fit>
          <Fit w={44}>4/2/2013</Fit>
        </div>
      </div>
    </div>
  );
}

export default function App() {
  return (
    <div className="relative flex h-[960px] w-[1280px] flex-col overflow-hidden bg-[#ece9d8]">
      <TitleBar />
      <MenuBar />
      <NavBar />
      <Bookmarks />
      <TabStrip />
      <div className="flex h-[778px] shrink-0 bg-white">
        <div className="flex w-[1263px] flex-col overflow-hidden">
          <PageHeader />
          <Table />
        </div>
        <div className="flex w-[17px] flex-col border-l border-[#e8e8f0] bg-[#f8f7f2]">
          <ScrollButton className="h-[17px] w-[16px]" />
          <div className="flex h-[624px] w-[16px] items-center justify-center rounded-[2px] border border-white bg-linear-to-r from-[#c9d8fd] via-[#bfd1fd] to-[#b0c4f3] shadow-[0_1px_0_#8ea8dc]">
            <Grip />
          </div>
          <ScrollButton down className="mt-auto h-[17px] w-[16px]" />
        </div>
      </div>
      <Taskbar />
      <div className={`absolute left-0 top-[882px] flex h-[18px] w-[242px] items-center rounded-tr-[2px] border-r border-t border-[#b3b1a8] bg-linear-to-b from-white to-[#e9e8e4] pl-[4px] pt-[2px] text-[11px] text-[#222] ${TAHOMA}`}>
        <Fit w={186}>Transferring data from 10.128.75.36...</Fit>
      </div>
      <Note />
      <div className={`pointer-events-none absolute left-[747px] top-[692px] flex flex-col items-start text-[36px] font-bold leading-[44px] text-[#297a0b] ${ARIAL}`}>
        <Fit w={476}>INRIX Data is updated after</Fit>
        <Fit w={234}>re-implement</Fit>
      </div>
    </div>
  );
}
